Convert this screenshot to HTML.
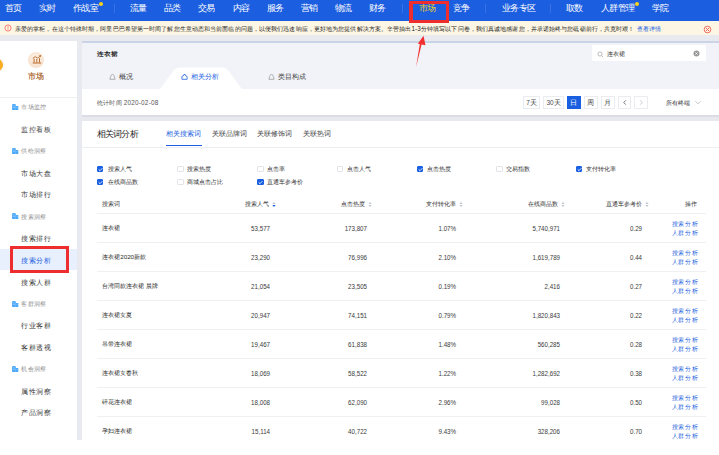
<!DOCTYPE html>
<html><head><meta charset="utf-8">
<style>
*{margin:0;padding:0;box-sizing:border-box}
html,body{width:719px;height:455px;overflow:hidden;background:#fff;font-family:"Liberation Sans",sans-serif;color:#333}
.a{position:absolute;white-space:nowrap}
#page{position:absolute;left:0;top:35px;width:719px;height:405px;background:#e8eaef}
#nav{position:absolute;left:0;top:0;width:719px;height:20.6px;background:#1c5ee0}
#nav .n{position:absolute;top:3.1px;font-size:9px;letter-spacing:-0.6px;line-height:11px;color:#fff}
#nav .sep{position:absolute;top:4.2px;width:1px;height:8.5px;background:#3a70e6}
#nav .dot{position:absolute;width:4.2px;height:4.2px;border-radius:50%;background:#f9d31b}
#notice{position:absolute;left:0;top:20.6px;width:719px;height:14.8px;background:#fdf6e4}
#notice .t{position:absolute;left:15px;top:4.3px;font-size:6.32px;letter-spacing:0.1px;line-height:8px;color:#262626}
#side{position:absolute;left:0;top:40.5px;width:77px;height:399.5px;background:#fff}
.grp{position:absolute;left:21.2px;margin-top:-0.6px;font-size:6.2px;letter-spacing:0.35px;line-height:8px;color:#8c8c8c}
.gic{position:absolute;left:11.9px;width:6.2px;height:6px;overflow:visible}
.itm{position:absolute;left:21.2px;margin-top:-1px;font-size:7.2px;letter-spacing:0.5px;line-height:9px;color:#383838}
#card1{position:absolute;left:82px;top:40.6px;width:637px;height:74.4px;background:#fff;border-top:2px solid #cbd4e6}
#card1 .hd{position:absolute;left:0;top:0;width:637px;height:46.6px;background:#f2f3f8}
#card2{position:absolute;left:82px;top:120px;width:637px;height:320px;background:#fff}
.btn{position:absolute;top:96px;height:13px;border:1px solid #ebecef;background:#fff;font-size:6.5px;line-height:11px;text-align:center;color:#4a4a4a}
.cb{position:absolute;width:6.4px;height:6.2px;border:0.8px solid #e2e4e8;border-radius:1px;background:#fff}
.cb.on{background:#1a5fe0;border-color:#1a5fe0}
.cbl{position:absolute;font-size:6.2px;line-height:8px;color:#333}
.th{position:absolute;top:200px;margin-top:-0.7px;font-size:6.2px;line-height:9px;color:#333}
.td{position:absolute;margin-top:-0.7px;font-size:6.2px;line-height:9px;color:#2b2b2b}
.num{text-align:right;margin-top:1.3px;font-size:7.1px;transform:scaleX(0.87);transform-origin:100% 50%;color:#3a3a3a}
.ln{position:absolute;left:97px;width:609px;height:1px;background:#f0f0f3}
.lk{position:absolute;font-size:6.2px;letter-spacing:0.6px;line-height:9px;color:#1c5fdd}
</style></head><body>
<div id="page"></div>

<!-- NAV -->
<div id="nav">
  <div class="n" style="left:5px">首页</div>
  <div class="n" style="left:39px">实时</div>
  <div class="n" style="left:73px">作战室</div>
  <div class="dot" style="left:99px;top:1.8px"></div>
  <div class="sep" style="left:114px"></div>
  <div class="n" style="left:130px">流量</div>
  <div class="n" style="left:164px">品类</div>
  <div class="n" style="left:198px">交易</div>
  <div class="n" style="left:233px">内容</div>
  <div class="n" style="left:267px">服务</div>
  <div class="n" style="left:301px">营销</div>
  <div class="n" style="left:335px">物流</div>
  <div class="n" style="left:369px">财务</div>
  <div class="sep" style="left:402px"></div>
  <div class="n" style="left:419px;color:#f2d022">市场</div>
  <div class="n" style="left:453px">竞争</div>
  <div class="sep" style="left:485px"></div>
  <div class="n" style="left:502px">业务专区</div>
  <div class="sep" style="left:550px"></div>
  <div class="n" style="left:566px">取数</div>
  <div class="n" style="left:601px">人群管理</div>
  <div class="dot" style="left:635px;top:1.8px"></div>
  <div class="n" style="left:652px">学院</div>
</div>

<!-- NOTICE -->
<div id="notice">
  <svg class="a" style="left:3.5px;top:3.9px" width="8" height="8" viewBox="0 0 8 8"><circle cx="4" cy="4" r="3.1" fill="none" stroke="#f25a50" stroke-width="0.75"/><rect x="3.65" y="2.1" width="0.7" height="2.5" fill="#f25a50"/><rect x="3.65" y="5.1" width="0.7" height="0.8" fill="#f25a50"/></svg>
  <div class="t">亲爱的掌柜，在这个特殊时期，阿里巴巴希望第一时间了解您生意动态和当前面临的问题，以便我们迅速响应，更好地为您提供解决方案。辛苦抽出1-3分钟填写以下问卷，我们真诚地感谢您，并承诺始终与您砥砺前行，共克时艰！</div>
  <div class="a" style="left:637px;top:4.3px;font-size:6.4px;line-height:8px;color:#1a5fe0">查看详情</div>
  <svg class="a" style="left:703px;top:4.4px" width="9" height="9" viewBox="0 0 9 9"><circle cx="4.5" cy="4.5" r="3.3" fill="none" stroke="#ef5b4c" stroke-width="0.9"/><path d="M3 3L6 6M6 3L3 6" stroke="#ef5b4c" stroke-width="0.9"/></svg>
</div>

<!-- SIDEBAR -->
<div id="side">
  <div class="a" style="left:0;top:208px;width:77px;height:21.5px;background:#e8effd"></div>
  <div class="a" style="left:10px;top:205px;width:59px;height:27.5px;border:3.6px solid #ee2e2e"></div>
  <div class="a" style="left:-8.7px;top:18.8px;width:11.6px;height:11.6px;border-radius:50%;background:#fcad22;box-shadow:0 0 2.5px rgba(0,0,0,.13)"></div>
  <div class="a" style="left:28px;top:11px;width:16px;height:16px;border-radius:50%;background:radial-gradient(circle at 50% 40%,#fdf1e6,#f5dcc6)"></div>
  <svg class="a" style="left:31.5px;top:13px" width="10" height="10" viewBox="0 0 10 10"><path d="M0.8 4.4L3.2 2.7L5.6 4.1L8 2.3" fill="none" stroke="#b86b2a" stroke-width="0.9" stroke-linejoin="round"/><path d="M6.9 1.5L9.2 1L8.8 3.3Z" fill="#b86b2a"/><rect x="1.6" y="4.6" width="1" height="3.9" fill="#b86b2a"/><rect x="4.3" y="4.9" width="1" height="3.6" fill="#b86b2a"/><rect x="7" y="4.2" width="1" height="4.3" fill="#b86b2a"/><rect x="0.7" y="8.5" width="8.6" height="1" fill="#b86b2a"/></svg>
  <div class="a" style="left:28px;top:31px;font-size:8px;line-height:10px;color:#a8601f;font-weight:normal;-webkit-text-stroke:0.15px #a8601f">市场</div>
  <div class="a" style="left:0;top:56px;width:77px;height:1px;background:#eef0f3"></div>
  <svg class="gic" style="top:63.8px" viewBox="0 0 6 6"><path d="M0 6V1Q0 0 1 0H2.8Q3.7 0 3.7 1V6Z" fill="#4aa8fb"/><rect x="3.7" y="2" width="2.5" height="4" fill="#4aa8fb"/><rect x="0.8" y="1.6" width="2" height="0.6" fill="#9fd0fd"/><rect x="0.8" y="3" width="2" height="0.6" fill="#9fd0fd"/><rect x="4.5" y="3" width="1" height="0.6" fill="#9fd0fd"/></svg>
  <div class="grp" style="top:63.5px">市场监控</div>
  <div class="itm" style="top:85.4px">监控看板</div>
  <svg class="gic" style="top:107.4px" viewBox="0 0 6 6"><path d="M0 6V1Q0 0 1 0H2.8Q3.7 0 3.7 1V6Z" fill="#4aa8fb"/><rect x="3.7" y="2" width="2.5" height="4" fill="#4aa8fb"/><rect x="0.8" y="1.6" width="2" height="0.6" fill="#9fd0fd"/><rect x="0.8" y="3" width="2" height="0.6" fill="#9fd0fd"/><rect x="4.5" y="3" width="1" height="0.6" fill="#9fd0fd"/></svg>
  <div class="grp" style="top:107.1px">供给洞察</div>
  <div class="itm" style="top:129.0px">市场大盘</div>
  <div class="itm" style="top:150.8px">市场排行</div>
  <svg class="gic" style="top:172.9px" viewBox="0 0 6 6"><path d="M0 6V1Q0 0 1 0H2.8Q3.7 0 3.7 1V6Z" fill="#4aa8fb"/><rect x="3.7" y="2" width="2.5" height="4" fill="#4aa8fb"/><rect x="0.8" y="1.6" width="2" height="0.6" fill="#9fd0fd"/><rect x="0.8" y="3" width="2" height="0.6" fill="#9fd0fd"/><rect x="4.5" y="3" width="1" height="0.6" fill="#9fd0fd"/></svg>
  <div class="grp" style="top:172.6px">搜索洞察</div>
  <div class="itm" style="top:194.5px">搜索排行</div>
  <div class="itm" style="top:216.3px;color:#1a5fe0">搜索分析</div>
  <div class="itm" style="top:238.1px">搜索人群</div>
  <svg class="gic" style="top:260.1px" viewBox="0 0 6 6"><path d="M0 6V1Q0 0 1 0H2.8Q3.7 0 3.7 1V6Z" fill="#4aa8fb"/><rect x="3.7" y="2" width="2.5" height="4" fill="#4aa8fb"/><rect x="0.8" y="1.6" width="2" height="0.6" fill="#9fd0fd"/><rect x="0.8" y="3" width="2" height="0.6" fill="#9fd0fd"/><rect x="4.5" y="3" width="1" height="0.6" fill="#9fd0fd"/></svg>
  <div class="grp" style="top:259.8px">客群洞察</div>
  <div class="itm" style="top:281.7px">行业客群</div>
  <div class="itm" style="top:303.5px">客群透视</div>
  <svg class="gic" style="top:325.5px" viewBox="0 0 6 6"><path d="M0 6V1Q0 0 1 0H2.8Q3.7 0 3.7 1V6Z" fill="#4aa8fb"/><rect x="3.7" y="2" width="2.5" height="4" fill="#4aa8fb"/><rect x="0.8" y="1.6" width="2" height="0.6" fill="#9fd0fd"/><rect x="0.8" y="3" width="2" height="0.6" fill="#9fd0fd"/><rect x="4.5" y="3" width="1" height="0.6" fill="#9fd0fd"/></svg>
  <div class="grp" style="top:325.2px">机会洞察</div>
  <div class="itm" style="top:347.1px">属性洞察</div>
  <div class="itm" style="top:368.9px">产品洞察</div>
</div>

<!-- CARD1 -->
<div id="card1"><div class="hd"></div>
  <div class="a" style="left:15.2px;top:7px;font-family:'Liberation Serif',serif;font-weight:bold;font-size:7px;line-height:9px;color:#2a2a2a;transform:scaleY(0.9);transform-origin:50% 100%">连衣裙</div>
  <svg class="a" style="left:78px;top:24.6px;" width="82" height="23" viewBox="0 0 82 23"><path d="M0 22 L14 3 Q16 0.5 19 0.5 L63 0.5 Q66 0.5 68 3 L82 22 Z" fill="#fff"/></svg>
  <svg class="a" style="left:27px;top:30.5px" width="7" height="7" viewBox="0 0 7 7"><path d="M0.9 6.3L1.7 3.3Q2.3 1.3 3.5 1.3Q4.7 1.3 5.3 3.3L6.1 6.3Z" fill="none" stroke="#a0a0a0" stroke-width="0.8" stroke-linejoin="round"/></svg>
  <div class="a" style="left:36.6px;top:29.9px;font-size:6.6px;line-height:9px;color:#444">概况</div>
  <svg class="a" style="left:99px;top:30.5px" width="7" height="7" viewBox="0 0 7 7"><path d="M0.9 6.3V3.7Q0.9 3.1 1.5 3.1H2.1L2.9 1.5H4.1L4.9 3.1H5.5Q6.1 3.1 6.1 3.7V6.3Z" fill="none" stroke="#1f63e0" stroke-width="0.8" stroke-linejoin="round"/></svg>
  <div class="a" style="left:108.7px;top:29.9px;font-size:6.6px;line-height:9px;color:#1a5fe0">相关分析</div>
  <svg class="a" style="left:186px;top:30.5px" width="7" height="7" viewBox="0 0 7 7"><path d="M0.9 6.3L1.7 3.3Q2.3 1.3 3.5 1.3Q4.7 1.3 5.3 3.3L6.1 6.3Z" fill="none" stroke="#a0a0a0" stroke-width="0.8" stroke-linejoin="round"/></svg>
  <div class="a" style="left:195.5px;top:29.9px;font-size:6.6px;line-height:9px;color:#444">类目构成</div>
  <div class="a" style="left:509.5px;top:2.7px;width:114px;height:15.4px;background:#fff;border-radius:1px"></div>
  <svg class="a" style="left:514.8px;top:8px" width="7" height="7" viewBox="0 0 7 7"><circle cx="3" cy="3" r="2.1" fill="none" stroke="#a8a8a8" stroke-width="0.75"/><path d="M4.5 4.5L6 6" stroke="#a8a8a8" stroke-width="0.8"/></svg>
  <div class="a" style="left:525px;top:6px;font-size:6.2px;line-height:9px;color:#333">连衣裙</div>
  <svg class="a" style="left:611px;top:7.5px" width="7" height="7" viewBox="0 0 7 7"><circle cx="3.5" cy="3.5" r="3" fill="#999"/><path d="M2.3 2.3L4.7 4.7M4.7 2.3L2.3 4.7" stroke="#fff" stroke-width="0.7"/></svg>
  <div class="btn" style="left:440.7px;top:53px;width:17.8px;">7天</div>
  <div class="btn" style="left:461.2px;top:53px;width:20.8px;">30天</div>
  <div class="btn" style="left:484.7px;top:53px;width:14.4px;background:#1a5fe0;border-color:#1a5fe0;color:#fff">日</div>
  <div class="btn" style="left:501.9px;top:53px;width:13.9px;">周</div>
  <div class="btn" style="left:518.5px;top:53px;width:14.0px;">月</div>
  <div class="btn" style="left:535.6px;top:53px;width:13.6px"><svg width="12" height="11" viewBox="0 0 12 11" style="position:absolute;left:0;top:0"><path d="M6.8 3.3L4.8 5.5L6.8 7.7" fill="none" stroke="#555" stroke-width="0.8"/></svg></div>
  <div class="btn" style="left:551.9px;top:53px;width:14px"><svg width="12" height="11" viewBox="0 0 12 11" style="position:absolute;left:0;top:0"><path d="M5.2 3.3L7.2 5.5L5.2 7.7" fill="none" stroke="#bbb" stroke-width="0.8"/></svg></div>
  <div class="a" style="left:584px;top:55px;font-size:6.2px;line-height:9px;color:#333">所有终端</div>
  <svg class="a" style="left:612px;top:56.5px" width="8" height="7" viewBox="0 0 8 7"><path d="M1.5 2.3L4 4.8L6.5 2.3" fill="none" stroke="#aaa" stroke-width="0.7"/></svg>
  <div class="a" style="left:15px;top:55px;font-size:6.4px;letter-spacing:0.2px;line-height:9px;color:#555">统计时间 2020-02-08</div>
</div>

<!-- CARD2 -->
<div id="card2">
  <div class="a" style="left:14.6px;top:9.2px;font-size:9px;letter-spacing:-0.75px;line-height:10px;color:#262626">相关词分析</div>
  <div class="a" style="left:84.0px;top:9.0px;font-size:7px;line-height:9px;color:#1a5fe0">相关搜索词</div>
  <div class="a" style="left:84.0px;top:25.1px;width:35.5px;height:1.4px;background:#1a5fe0"></div>
  <div class="a" style="left:0.0px;top:26.5px;width:637px;height:1px;background:#eceef2"></div>
  <div class="a" style="left:129.5px;top:9.0px;font-size:7px;line-height:9px;color:#444">关联品牌词</div>
  <div class="a" style="left:175.0px;top:9.0px;font-size:7px;line-height:9px;color:#444">关联修饰词</div>
  <div class="a" style="left:220.8px;top:9.0px;font-size:7px;line-height:9px;color:#444">关联热词</div>
  <div class="cb on" style="left:15.0px;top:45.9px"><svg width="5" height="5" viewBox="0 0 5 5" style="position:absolute;left:0;top:0"><path d="M0.7 2.4L2 3.7L4.3 1.2" fill="none" stroke="#fff" stroke-width="0.85"/></svg></div>
  <div class="cbl" style="left:25.5px;top:44.9px">搜索人气</div>
  <div class="cb on" style="left:15.0px;top:58.8px"><svg width="5" height="5" viewBox="0 0 5 5" style="position:absolute;left:0;top:0"><path d="M0.7 2.4L2 3.7L4.3 1.2" fill="none" stroke="#fff" stroke-width="0.85"/></svg></div>
  <div class="cbl" style="left:25.5px;top:57.8px">在线商品数</div>
  <div class="cb" style="left:95.3px;top:45.9px"></div>
  <div class="cbl" style="left:105.3px;top:44.9px">搜索热度</div>
  <div class="cb" style="left:95.3px;top:58.8px"></div>
  <div class="cbl" style="left:105.3px;top:57.8px">商城点击占比</div>
  <div class="cb" style="left:175.2px;top:45.9px"></div>
  <div class="cbl" style="left:185.2px;top:44.9px">点击率</div>
  <div class="cb on" style="left:175.2px;top:58.8px"><svg width="5" height="5" viewBox="0 0 5 5" style="position:absolute;left:0;top:0"><path d="M0.7 2.4L2 3.7L4.3 1.2" fill="none" stroke="#fff" stroke-width="0.85"/></svg></div>
  <div class="cbl" style="left:185.2px;top:57.8px">直通车参考价</div>
  <div class="cb" style="left:254.5px;top:45.9px"></div>
  <div class="cbl" style="left:264.5px;top:44.9px">点击人气</div>
  <div class="cb on" style="left:334.6px;top:45.9px"><svg width="5" height="5" viewBox="0 0 5 5" style="position:absolute;left:0;top:0"><path d="M0.7 2.4L2 3.7L4.3 1.2" fill="none" stroke="#fff" stroke-width="0.85"/></svg></div>
  <div class="cbl" style="left:344.6px;top:44.9px">点击热度</div>
  <div class="cb" style="left:414.3px;top:45.9px"></div>
  <div class="cbl" style="left:424.3px;top:44.9px">交易指数</div>
  <div class="cb on" style="left:493.8px;top:45.9px"><svg width="5" height="5" viewBox="0 0 5 5" style="position:absolute;left:0;top:0"><path d="M0.7 2.4L2 3.7L4.3 1.2" fill="none" stroke="#fff" stroke-width="0.85"/></svg></div>
  <div class="cbl" style="left:503.8px;top:44.9px">支付转化率</div>
  <div class="th" style="left:20.3px;top:80.0px">搜索词</div>
  <div class="th" style="left:86.6px;width:100px;text-align:right;top:80px">搜索人气</div>
  <svg class="a" style="left:189.6px;top:80.8px" width="4" height="7" viewBox="0 0 4 7"><path d="M0.4 3L2 1L3.6 3Z" fill="#c0c4cc"/><path d="M0.4 4L2 6L3.6 4Z" fill="#1a5fe0"/></svg>
  <div class="th" style="left:183.0px;width:100px;text-align:right;top:80px">点击热度</div>
  <svg class="a" style="left:286.0px;top:80.8px" width="4" height="7" viewBox="0 0 4 7"><path d="M0.4 3L2 1L3.6 3Z" fill="#c0c4cc"/><path d="M0.4 4L2 6L3.6 4Z" fill="#c0c4cc"/></svg>
  <div class="th" style="left:273.5px;width:100px;text-align:right;top:80px">支付转化率</div>
  <svg class="a" style="left:376.5px;top:80.8px" width="4" height="7" viewBox="0 0 4 7"><path d="M0.4 3L2 1L3.6 3Z" fill="#c0c4cc"/><path d="M0.4 4L2 6L3.6 4Z" fill="#c0c4cc"/></svg>
  <div class="th" style="left:376.4px;width:100px;text-align:right;top:80px">在线商品数</div>
  <svg class="a" style="left:479.4px;top:80.8px" width="4" height="7" viewBox="0 0 4 7"><path d="M0.4 3L2 1L3.6 3Z" fill="#c0c4cc"/><path d="M0.4 4L2 6L3.6 4Z" fill="#c0c4cc"/></svg>
  <div class="th" style="left:459.8px;width:100px;text-align:right;top:80px">直通车参考价</div>
  <svg class="a" style="left:562.8px;top:80.8px" width="4" height="7" viewBox="0 0 4 7"><path d="M0.4 3L2 1L3.6 3Z" fill="#c0c4cc"/><path d="M0.4 4L2 6L3.6 4Z" fill="#c0c4cc"/></svg>
  <div class="th" style="left:515.0px;width:100px;text-align:right;top:80px">操作</div>
  <div class="ln" style="left:15px;top:93px"></div>
  <div class="td" style="left:20.3px;top:103.7px">连衣裙</div>
  <div class="td num" style="left:108.0px;width:80px;top:103.7px">53,577</div>
  <div class="td num" style="left:204.8px;width:80px;top:103.7px">173,807</div>
  <div class="td num" style="left:294.0px;width:80px;top:103.7px">1.07%</div>
  <div class="td num" style="left:397.8px;width:80px;top:103.7px">5,740,971</div>
  <div class="td num" style="left:480.2px;width:80px;top:103.7px">0.29</div>
  <div class="lk" style="left:589.8px;top:98.7px">搜索分析</div>
  <div class="lk" style="left:589.8px;top:107.8px">人群分析</div>
  <div class="ln" style="left:15px;top:122.0px"></div>
  <div class="td" style="left:20.3px;top:132.7px">连衣裙2020新款</div>
  <div class="td num" style="left:108.0px;width:80px;top:132.7px">23,290</div>
  <div class="td num" style="left:204.8px;width:80px;top:132.7px">76,996</div>
  <div class="td num" style="left:294.0px;width:80px;top:132.7px">2.10%</div>
  <div class="td num" style="left:397.8px;width:80px;top:132.7px">1,619,789</div>
  <div class="td num" style="left:480.2px;width:80px;top:132.7px">0.44</div>
  <div class="lk" style="left:589.8px;top:127.7px">搜索分析</div>
  <div class="lk" style="left:589.8px;top:136.8px">人群分析</div>
  <div class="ln" style="left:15px;top:151.1px"></div>
  <div class="td" style="left:20.3px;top:161.8px">台湾同款连衣裙 晨牌</div>
  <div class="td num" style="left:108.0px;width:80px;top:161.8px">21,054</div>
  <div class="td num" style="left:204.8px;width:80px;top:161.8px">23,505</div>
  <div class="td num" style="left:294.0px;width:80px;top:161.8px">0.19%</div>
  <div class="td num" style="left:397.8px;width:80px;top:161.8px">2,416</div>
  <div class="td num" style="left:480.2px;width:80px;top:161.8px">0.27</div>
  <div class="lk" style="left:589.8px;top:156.8px">搜索分析</div>
  <div class="lk" style="left:589.8px;top:165.9px">人群分析</div>
  <div class="ln" style="left:15px;top:180.1px"></div>
  <div class="td" style="left:20.3px;top:190.8px">连衣裙女夏</div>
  <div class="td num" style="left:108.0px;width:80px;top:190.8px">20,947</div>
  <div class="td num" style="left:204.8px;width:80px;top:190.8px">74,151</div>
  <div class="td num" style="left:294.0px;width:80px;top:190.8px">0.79%</div>
  <div class="td num" style="left:397.8px;width:80px;top:190.8px">1,820,843</div>
  <div class="td num" style="left:480.2px;width:80px;top:190.8px">0.22</div>
  <div class="lk" style="left:589.8px;top:185.8px">搜索分析</div>
  <div class="lk" style="left:589.8px;top:194.9px">人群分析</div>
  <div class="ln" style="left:15px;top:209.1px"></div>
  <div class="td" style="left:20.3px;top:219.8px">吊带连衣裙</div>
  <div class="td num" style="left:108.0px;width:80px;top:219.8px">19,467</div>
  <div class="td num" style="left:204.8px;width:80px;top:219.8px">61,838</div>
  <div class="td num" style="left:294.0px;width:80px;top:219.8px">1.48%</div>
  <div class="td num" style="left:397.8px;width:80px;top:219.8px">560,285</div>
  <div class="td num" style="left:480.2px;width:80px;top:219.8px">0.28</div>
  <div class="lk" style="left:589.8px;top:214.8px">搜索分析</div>
  <div class="lk" style="left:589.8px;top:223.9px">人群分析</div>
  <div class="ln" style="left:15px;top:238.1px"></div>
  <div class="td" style="left:20.3px;top:248.8px">连衣裙女春秋</div>
  <div class="td num" style="left:108.0px;width:80px;top:248.8px">18,069</div>
  <div class="td num" style="left:204.8px;width:80px;top:248.8px">58,522</div>
  <div class="td num" style="left:294.0px;width:80px;top:248.8px">1.22%</div>
  <div class="td num" style="left:397.8px;width:80px;top:248.8px">1,282,692</div>
  <div class="td num" style="left:480.2px;width:80px;top:248.8px">0.38</div>
  <div class="lk" style="left:589.8px;top:243.8px">搜索分析</div>
  <div class="lk" style="left:589.8px;top:252.9px">人群分析</div>
  <div class="ln" style="left:15px;top:267.2px"></div>
  <div class="td" style="left:20.3px;top:277.9px">碎花连衣裙</div>
  <div class="td num" style="left:108.0px;width:80px;top:277.9px">18,008</div>
  <div class="td num" style="left:204.8px;width:80px;top:277.9px">62,090</div>
  <div class="td num" style="left:294.0px;width:80px;top:277.9px">2.96%</div>
  <div class="td num" style="left:397.8px;width:80px;top:277.9px">99,028</div>
  <div class="td num" style="left:480.2px;width:80px;top:277.9px">0.50</div>
  <div class="lk" style="left:589.8px;top:272.9px">搜索分析</div>
  <div class="lk" style="left:589.8px;top:282.0px">人群分析</div>
  <div class="ln" style="left:15px;top:296.2px"></div>
  <div class="td" style="left:20.3px;top:306.9px">孕妇连衣裙</div>
  <div class="td num" style="left:108.0px;width:80px;top:306.9px">15,114</div>
  <div class="td num" style="left:204.8px;width:80px;top:306.9px">40,722</div>
  <div class="td num" style="left:294.0px;width:80px;top:306.9px">9.43%</div>
  <div class="td num" style="left:397.8px;width:80px;top:306.9px">328,206</div>
  <div class="td num" style="left:480.2px;width:80px;top:306.9px">0.70</div>
  <div class="lk" style="left:589.8px;top:301.9px">搜索分析</div>
  <div class="lk" style="left:589.8px;top:311.0px">人群分析</div>
</div>

<!-- OVERLAYS -->
<div class="a" style="left:82px;top:115px;width:637px;height:2.2px;background:#dadde3"></div>
<div class="a" style="left:82px;top:117.2px;width:637px;height:3.8px;background:#e7e9ee"></div>
<div class="a" style="left:0;top:440px;width:719px;height:15px;background:#fff"></div>
<div class="a" style="left:409px;top:0.9px;width:40px;height:21.9px;border:solid #ee2e2e;border-width:3px 3.3px 3.7px 4px"></div>
<svg class="a" style="left:0;top:0" width="719" height="455" viewBox="0 0 719 455"><path d="M423.5 35.8 L425.5 45.3 L421.6 44.6 L416 67.3 L419.8 43.9 L417.8 43.8 Z" fill="#f23030"/></svg>
</body></html>
